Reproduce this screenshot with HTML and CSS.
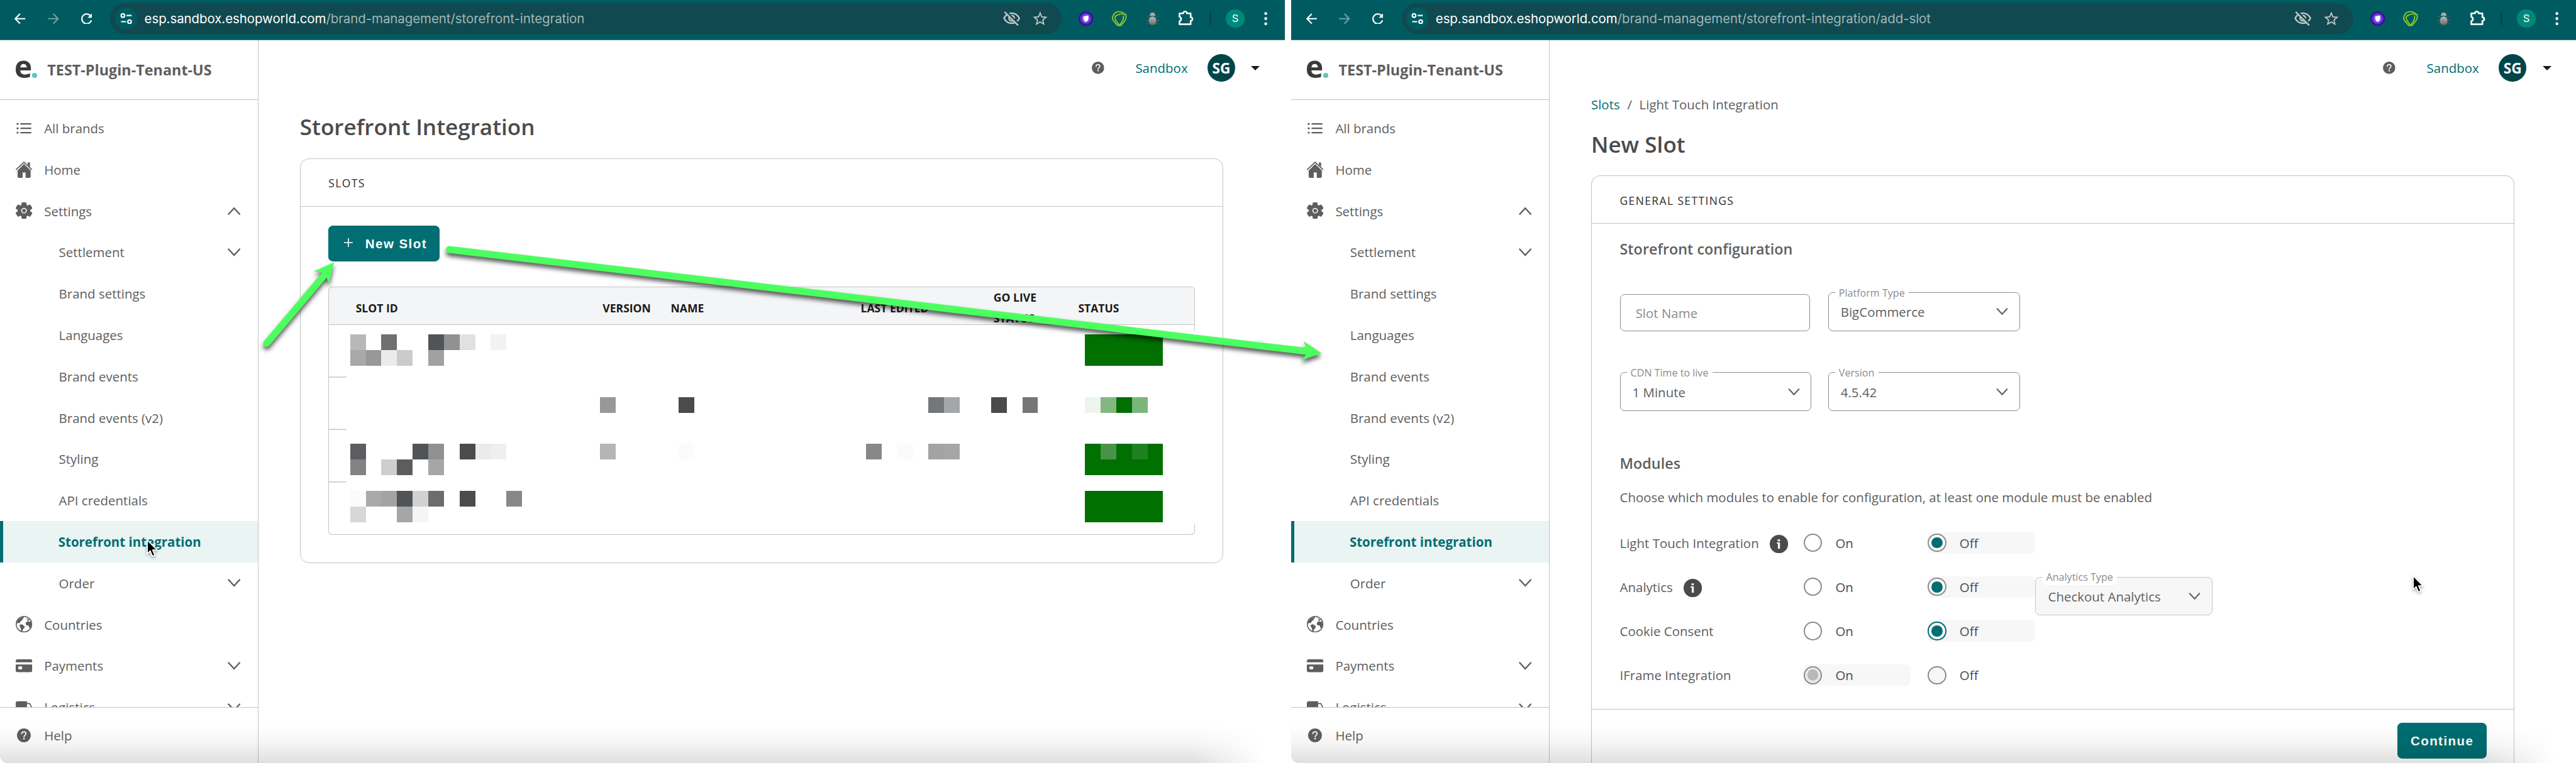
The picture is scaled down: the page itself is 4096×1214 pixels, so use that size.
FILE: index.html
```
<!DOCTYPE html>
<html lang="en">
<head>
<meta charset="utf-8">
<title>Storefront Integration</title>
<link rel="stylesheet" href="styles.css">
</head>
<body>
<svg class="defs" width="0" height="0" aria-hidden="true">
  <defs>
    <linearGradient id="bug-fill" x1="0" y1="0" x2="0" y2="1"><stop offset="0" stop-color="#b9b9b9"/><stop offset="1" stop-color="#6a6a6a"/></linearGradient>
    <symbol id="i-back" viewBox="0 0 24 24"><path d="M23.500 12H2M12 1.500L1.700 12 12 22.500" fill="none" stroke="currentColor" stroke-width="3"/></symbol>
    <symbol id="i-forward" viewBox="0 0 24 24"><path d="M.5 12H22M12 1.500L22.300 12 12 22.500" fill="none" stroke="currentColor" stroke-width="3"/></symbol>
    <symbol id="i-reload" viewBox="0 0 24 24"><path d="M22.300 15.500A10.600 10.600 0 1 1 20.600 5.800" fill="none" stroke="currentColor" stroke-width="3"/><path d="M24 0v10H14z" fill="currentColor"/></symbol>
    <symbol id="i-site" viewBox="0 0 26 24"><g fill="none" stroke="currentColor" stroke-width="3"><circle cx="6" cy="5" r="3.800"/><path d="M14 5h11M2 18.500h11"/><circle cx="20.500" cy="18.500" r="3.800"/></g></symbol>
    <symbol id="i-eye-off" viewBox="0 0 24 24"><path fill="currentColor" d="M12 6c3.790 0 7.170 2.130 8.820 5.500-.59 1.220-1.420 2.270-2.410 3.120l1.410 1.410c1.390-1.230 2.490-2.770 3.180-4.530C21.270 7.110 17 4 12 4c-1.270 0-2.490.2-3.640.57l1.650 1.650C10.660 6.090 11.320 6 12 6zm-1.070 1.140L13 9.210c.57.25 1.030.71 1.280 1.280l2.070 2.070c.08-.34.14-.7.14-1.070C16.500 9.010 14.480 7 12 7c-.37 0-.72.05-1.070.14zM2.010 3.870l2.680 2.680C3.060 7.830 1.770 9.530 1 11.500 2.730 15.890 7 19 12 19c1.520 0 2.980-.29 4.320-.82l3.420 3.420 1.410-1.410L3.420 2.450 2.010 3.870zm7.500 7.500l2.610 2.610c-.04.01-.08.02-.12.02-1.380 0-2.500-1.120-2.500-2.500 0-.05.01-.08.01-.13zm-3.400-3.400l1.750 1.750c-.23.55-.36 1.150-.36 1.780 0 2.480 2.020 4.500 4.500 4.500.63 0 1.230-.13 1.770-.36l.98.98c-.88.24-1.800.38-2.750.38-3.790 0-7.170-2.130-8.820-5.500.7-1.430 1.720-2.610 2.930-3.530z"/></symbol>
    <symbol id="i-star" viewBox="0 0 24 24"><path fill="currentColor" d="M22 9.240l-7.190-.62L12 2 9.190 8.630 2 9.240l5.460 4.730L5.820 21 12 17.270 18.180 21l-1.630-7.030L22 9.240zM12 15.400l-3.760 2.270 1-4.280-3.320-2.880 4.380-.38L12 6.100l1.710 4.040 4.380.38-3.320 2.880 1 4.280L12 15.400z"/></symbol>
    <symbol id="i-purple" viewBox="0 0 40 40"><circle cx="20" cy="20" r="16" fill="#38128f"/><circle cx="20" cy="20" r="12.500" fill="#5a2fcb"/><circle cx="20" cy="20" r="9" fill="#7d53ec"/><path d="M14.500 15.500L25.500 13v7c0 3-2 5.500-5 7.500-3-1.500-5-3.500-5.500-6z" fill="#fff"/></symbol>
    <symbol id="i-green" viewBox="0 0 40 40"><g fill="none" stroke="#8ac926" stroke-width="2.600" stroke-linecap="round" stroke-linejoin="round"><path d="M8.500 10.500Q11.500 5 20 5t11.500 5.500"/><path d="M8.500 10.500Q2.500 19 8 25l8.500 10h7L32 25q5-8 2-14.500Q22 8 12 14.500"/><path d="M12 14.500q-3 6 2 11.500l5 7M29.500 14q0 8-3.500 13l-4.500 6"/></g></symbol>
    <symbol id="i-bug" viewBox="0 0 40 40"><path d="M7 14l7 4M33 14l-7 4M5 24h8M35 24h-8M7 32l7-4M33 32l-7-4" stroke="#4a5a5c" stroke-width="2"/><path d="M14 14q0-7 6-7t6 7z" fill="#ababab"/><rect x="12" y="15.500" width="16" height="18.500" rx="8" fill="url(#bug-fill)"/></symbol>
    <symbol id="i-puzzle" viewBox="0 0 40 40"><path d="M7.500 8.500h8a4 4 0 0 1 8 0h8.200V17a4 4 0 0 1 0 8v7.300H7.500v-6.800a5 5 0 0 0 0-9.500z" fill="none" stroke="currentColor" stroke-width="3.600" stroke-linejoin="round"/></symbol>
    <symbol id="i-dots" viewBox="0 0 40 40"><g fill="currentColor"><circle cx="20" cy="9" r="3.100"/><circle cx="20" cy="20" r="3.100"/><circle cx="20" cy="31" r="3.100"/></g></symbol>
    <symbol id="i-help" viewBox="0 0 30 30"><circle cx="15" cy="15" r="15" fill="currentColor"/><path d="M10.200 11.600c.2-2.900 2.200-4.300 4.800-4.300 2.700 0 4.700 1.500 4.700 3.900 0 3.300-4.500 3.500-4.500 7.300" fill="none" stroke="#fff" stroke-width="2.400" stroke-linecap="round"/><circle cx="15.200" cy="22.300" r="1.700" fill="#fff"/></symbol>
    <symbol id="i-info" viewBox="0 0 40 40"><circle cx="20" cy="20" r="20" fill="#4b4b4d"/><path d="M17.200 10h5v4h-5zM15.500 16.500h6.700v13.500h-4.400V19h-2.300z" fill="#fff"/></symbol>
    <symbol id="i-list" viewBox="0 0 36 36"><g fill="currentColor"><circle cx="4" cy="8.500" r="2.200"/><circle cx="4" cy="18" r="2.200"/><circle cx="4" cy="27.500" r="2.200"/><rect x="10" y="7" width="24" height="3" rx="1"/><rect x="10" y="16.500" width="24" height="3" rx="1"/><rect x="10" y="26" width="24" height="3" rx="1"/></g></symbol>
    <symbol id="i-home" viewBox="0 0 36 36"><g fill="currentColor"><path d="M26 2h5v10l-5-5zM18 5.500L4 19.500V33a2.500 2.500 0 0 0 2.500 2.500H15V24h6.500v11.500H30a2.500 2.500 0 0 0 2.500-2.500V19.500z"/></g><path d="M0.500 18L18 1.500 35.500 18" fill="none" stroke="currentColor" stroke-width="2.400"/></symbol>
    <symbol id="i-gear" viewBox="0 0 36 36"><g fill="currentColor"><circle cx="18" cy="18" r="13.800"/><rect x="12.500" y="0" width="11" height="36" rx="2.500"/><rect x="12.500" y="-.5" width="11" height="37" rx="2.500" transform="rotate(60 18 18)"/><rect x="12.500" y="-.5" width="11" height="37" rx="2.500" transform="rotate(120 18 18)"/></g><circle cx="18" cy="18" r="5" fill="none" stroke="#fff" stroke-width="2.200"/></symbol>
    <symbol id="i-globe" viewBox="0 0 36 36"><circle cx="18" cy="18" r="16.900" fill="none" stroke="currentColor" stroke-width="2.200"/><path fill="currentColor" d="M7 6.500L14 2.500l4-.5-1 3-3 1.500 1.500 2-4.500 2.500-2 4-2.500 1L4 14.500 3 18 1.500 16Q2.500 10.500 7 6.500zM8.500 19l5-1 6 4.500-1 4-3 3-1.500 5.500-2-.5-1-7.500-2.500-4zM20 3l3 1-.5 2 2.500-.5L30.500 9l-4 1.500 2 2 4-.5 2 6-2 7.500-3 1-1.500-5.500-4.500-.5-2-3.500 1.500-4 4-1.500-2-2 .5-3-3-1.500z"/></symbol>
    <symbol id="i-card" viewBox="0 0 36 36"><path fill="currentColor" d="M0 10.500V8a4 4 0 0 1 4-4h28a4 4 0 0 1 4 4v2.500zM0 15.500h36V28a4 4 0 0 1-4 4H4a4 4 0 0 1-4-4z"/><rect x="5.500" y="19.500" width="8.500" height="6.500" rx="2" fill="#fff"/></symbol>
    <symbol id="i-truck" viewBox="0 0 36 36"><path fill="currentColor" d="M0 9a4 4 0 0 1 4-4h20.500v23H0z"/><path d="M24.500 10h4.500q1.500 0 2.200 1.400L35 19v9H24.500" fill="none" stroke="currentColor" stroke-width="2.300"/><g fill="currentColor"><circle cx="9" cy="29" r="4"/><circle cx="28" cy="29" r="4"/></g></symbol>
    <symbol id="i-chevron" viewBox="0 0 28 18"><path d="M2 2l12 13L26 2" fill="none" stroke="currentColor" stroke-width="3.200" stroke-linecap="round"/></symbol>
    <symbol id="i-plus" viewBox="0 0 20 20"><path d="M10 0v20M0 10h20" stroke="currentColor" stroke-width="2.300"/></symbol>
    <symbol id="i-cursor" viewBox="0 0 26 40"><path d="M1.500 1.500v30l6.500-6 4.800 11.500 5.400-2.300L13.500 23.500H23z" fill="#000" stroke="#fff" stroke-width="2.400" stroke-linejoin="round"/></symbol>
  </defs>
</svg>

<div class="desktop">
  <section class="window">
    <header class="toolbar">
      <nav class="history">
        <span class="tool"><svg class="ico24"><use href="#i-back"/></svg></span>
        <span class="tool is-dim"><svg class="ico24"><use href="#i-forward"/></svg></span>
        <span class="tool"><svg class="ico24"><use href="#i-reload"/></svg></span>
      </nav>
      <div class="address">
        <span class="site"><svg class="ico-site"><use href="#i-site"/></svg></span>
        <span class="url">esp.sandbox.eshopworld.com<span class="path">/brand-management/storefront-integration</span></span>
        <svg class="ico-eye"><use href="#i-eye-off"/></svg>
        <svg class="ico-star"><use href="#i-star"/></svg>
      </div>
      <div class="extensions">
        <svg class="ico40"><use href="#i-purple"/></svg>
        <svg class="ico40"><use href="#i-green"/></svg>
        <svg class="ico40"><use href="#i-bug"/></svg>
        <svg class="ico40"><use href="#i-puzzle"/></svg>
        <span class="divider"></span>
        <span class="profile">S</span>
        <svg class="ico40 ico-menu"><use href="#i-dots"/></svg>
      </div>
    </header>
    <div class="app">
      <aside class="sidebar">
        <div class="brand"><span class="logo">e<i></i></span><span class="tenant">TEST-Plugin-Tenant-US</span></div>
        <nav class="menu">
          <a class="item"><svg class="ico36"><use href="#i-list"/></svg><span>All brands</span></a>
          <a class="item"><svg class="ico36"><use href="#i-home"/></svg><span>Home</span></a>
          <a class="item"><svg class="ico36"><use href="#i-gear"/></svg><span>Settings</span><svg class="chev up"><use href="#i-chevron"/></svg></a>
          <a class="item sub"><span>Settlement</span><svg class="chev"><use href="#i-chevron"/></svg></a>
          <a class="item sub"><span>Brand settings</span></a>
          <a class="item sub"><span>Languages</span></a>
          <a class="item sub"><span>Brand events</span></a>
          <a class="item sub"><span>Brand events (v2)</span></a>
          <a class="item sub"><span>Styling</span></a>
          <a class="item sub"><span>API credentials</span></a>
          <a class="item sub active"><span>Storefront integration</span></a>
          <a class="item sub"><span>Order</span><svg class="chev"><use href="#i-chevron"/></svg></a>
          <a class="item"><svg class="ico36"><use href="#i-globe"/></svg><span>Countries</span></a>
          <a class="item"><svg class="ico36"><use href="#i-card"/></svg><span>Payments</span><svg class="chev"><use href="#i-chevron"/></svg></a>
          <a class="item"><svg class="ico36"><use href="#i-truck"/></svg><span>Logistics</span><svg class="chev"><use href="#i-chevron"/></svg></a>
        </nav>
        <a class="item help"><svg class="ico-help"><use href="#i-help"/></svg><span>Help</span></a>
      </aside>
      <main class="main">
        <div class="userbar">
          <svg class="ico-about"><use href="#i-help"/></svg>
          <span class="env">Sandbox</span>
          <span class="avatar">SG</span>
          <span class="caret"></span>
        </div>
        <div class="content">
          <h1 class="title">Storefront Integration</h1>
          <section class="card">
            <header class="card-head">SLOTS</header>
            <div class="slots">
              <button class="btn btn-new"><svg class="ico-plus"><use href="#i-plus"/></svg>New Slot</button>
              <div class="table">
                <div class="thead">
                  <span>SLOT ID</span><span>VERSION</span><span>NAME</span><span>LAST EDITED</span><span class="two-line">GO LIVE STATUS</span><span>STATUS</span>
                </div>
                <div class="tbody">
                  <!-- Row separators and redacted cells, on a 34px grid -->
                  <svg class="redacted" viewBox="716 707 1880 455">
                    <path d="M716 819.500h38v2h-38zM716 933.500h38v2h-38zM716 1047.500h38v2h-38z" fill="#c4c4c4"/>
                    <rect x="2594" y="720" width="8" height="420" fill="#fff"/>
                    <g transform="translate(762 728) scale(34)" shape-rendering="crispEdges">
                      <path fill="#b8b8b8" d="M0 0h1v1H0z"/><path fill="#6e6f70" d="M2 0h1v1H2z"/><path fill="#525355" d="M5 0h1v1H5zM4 7h1v1H4zM3 10h1v1H3z"/><path fill="#909192" d="M6 0h1v1H6zM5 7h1v1H5z"/><path fill="#e1e1e1" d="M7 0h1v1H7z"/><path fill="#f2f2f2" d="M9 0h1v1H9z"/>
                      <path fill="#a8a8a8" d="M0 1h1v1H0z"/><path fill="#97989a" d="M1 1h1v1H1zM16 4h1v1h-1z"/><path fill="#ebebeb" d="M2 1h1v1H2zM8 7h1v1H8z"/><path fill="#cbcbcb" d="M3 1h1v1H3z"/><path fill="#a1a1a1" d="M5 1h1v1H5z"/>
                      <path fill="#4b4b4d" d="M21 4h1v1h-1zM41 4h1v1h-1zM7 7h1v1H7zM7 10h1v1H7z"/><path fill="#757678" d="M37 4h1v1h-1zM43 4h1v1h-1z"/><path fill="#a5a6a8" d="M38 4h1v1h-1zM38 7h1v1h-1zM5 8h1v1H5zM3 11h1v1H3z"/>
                      <path fill="#5c5d5f" d="M0 7h1v1H0zM3 8h1v1H3z"/><path fill="#efefef" d="M9 7h1v1H9z"/><path fill="#b4b5b4" d="M16 7h1v1h-1z"/><path fill="#fbfbfb" d="M21 7h1v1h-1zM35 7h1v1h-1zM0 10h1v1H0z"/><path fill="#87888a" d="M33 7h1v1h-1zM10 10h1v1h-1z"/><path fill="#a3a3a3" d="M37 7h1v1h-1zM2 10h1v1H2z"/>
                      <path fill="#838385" d="M0 8h1v1H0z"/><path fill="#cdcfce" d="M2 8h1v1H2z"/><path fill="#a8aaa9" d="M1 10h1v1H1z"/><path fill="#d1d1d1" d="M4 10h1v1H4z"/><path fill="#6b6c6e" d="M5 10h1v1H5z"/><path fill="#d7d7d7" d="M0 11h1v1H0z"/><path fill="#f5f5f5" d="M4 11h1v1H4z"/>
                      <path fill="#007000" d="M47 0h5v2h-5zM49 4h1v1h-1zM47 7h5v2h-5zM47 10h5v2h-5z"/><path fill="#eef4ee" d="M47 4h1v1h-1z"/><path fill="#83b782" d="M48 4h1v1h-1z"/><path fill="#7bb57b" d="M50 4h1v1h-1z"/><path fill="#479347" d="M48 7h1v1h-1z"/><path fill="#1e801e" d="M50 7h1v1h-1z"/>
                    </g>
                  </svg>
                </div>
              </div>
            </div>
          </section>
        </div>
      </main>
    </div>
  </section>

  <section class="window">
    <header class="toolbar">
      <nav class="history">
        <span class="tool"><svg class="ico24"><use href="#i-back"/></svg></span>
        <span class="tool is-dim"><svg class="ico24"><use href="#i-forward"/></svg></span>
        <span class="tool"><svg class="ico24"><use href="#i-reload"/></svg></span>
      </nav>
      <div class="address">
        <span class="site"><svg class="ico-site"><use href="#i-site"/></svg></span>
        <span class="url">esp.sandbox.eshopworld.com<span class="path">/brand-management/storefront-integration/add-slot</span></span>
        <svg class="ico-eye"><use href="#i-eye-off"/></svg>
        <svg class="ico-star"><use href="#i-star"/></svg>
      </div>
      <div class="extensions">
        <svg class="ico40"><use href="#i-purple"/></svg>
        <svg class="ico40"><use href="#i-green"/></svg>
        <svg class="ico40"><use href="#i-bug"/></svg>
        <svg class="ico40"><use href="#i-puzzle"/></svg>
        <span class="divider"></span>
        <span class="profile">S</span>
        <svg class="ico40 ico-menu"><use href="#i-dots"/></svg>
      </div>
    </header>
    <div class="app">
      <aside class="sidebar">
        <div class="brand"><span class="logo">e<i></i></span><span class="tenant">TEST-Plugin-Tenant-US</span></div>
        <nav class="menu">
          <a class="item"><svg class="ico36"><use href="#i-list"/></svg><span>All brands</span></a>
          <a class="item"><svg class="ico36"><use href="#i-home"/></svg><span>Home</span></a>
          <a class="item"><svg class="ico36"><use href="#i-gear"/></svg><span>Settings</span><svg class="chev up"><use href="#i-chevron"/></svg></a>
          <a class="item sub"><span>Settlement</span><svg class="chev"><use href="#i-chevron"/></svg></a>
          <a class="item sub"><span>Brand settings</span></a>
          <a class="item sub"><span>Languages</span></a>
          <a class="item sub"><span>Brand events</span></a>
          <a class="item sub"><span>Brand events (v2)</span></a>
          <a class="item sub"><span>Styling</span></a>
          <a class="item sub"><span>API credentials</span></a>
          <a class="item sub active"><span>Storefront integration</span></a>
          <a class="item sub"><span>Order</span><svg class="chev"><use href="#i-chevron"/></svg></a>
          <a class="item"><svg class="ico36"><use href="#i-globe"/></svg><span>Countries</span></a>
          <a class="item"><svg class="ico36"><use href="#i-card"/></svg><span>Payments</span><svg class="chev"><use href="#i-chevron"/></svg></a>
          <a class="item"><svg class="ico36"><use href="#i-truck"/></svg><span>Logistics</span><svg class="chev"><use href="#i-chevron"/></svg></a>
        </nav>
        <a class="item help"><svg class="ico-help"><use href="#i-help"/></svg><span>Help</span></a>
      </aside>
      <main class="main">
        <div class="userbar">
          <svg class="ico-about"><use href="#i-help"/></svg>
          <span class="env">Sandbox</span>
          <span class="avatar">SG</span>
          <span class="caret"></span>
        </div>
        <div class="content content-form">
          <nav class="crumbs"><a>Slots</a><span>/</span><span>Light Touch Integration</span></nav>
          <h1 class="title">New Slot</h1>
          <section class="card card-open">
            <header class="card-head">GENERAL SETTINGS</header>
            <div class="form">
              <h2 class="heading">Storefront configuration</h2>
              <div class="fields">
                <div class="field field-plain"><span>Slot Name</span></div>
                <div class="field"><label>Platform Type</label><span>BigCommerce</span><svg class="arrow"><use href="#i-chevron"/></svg></div>
                <div class="field"><label>CDN Time to live</label><span>1 Minute</span><svg class="arrow"><use href="#i-chevron"/></svg></div>
                <div class="field"><label>Version</label><span>4.5.42</span><svg class="arrow"><use href="#i-chevron"/></svg></div>
              </div>
              <h2 class="heading">Modules</h2>
              <p class="hint">Choose which modules to enable for configuration, at least one module must be enabled</p>
              <div class="modules">
                <div class="module">
                  <span class="name">Light Touch Integration<svg class="ico40"><use href="#i-info"/></svg></span>
                  <span class="option"><i class="radio"></i>On</span>
                  <span class="option selected"><i class="radio checked"></i>Off</span>
                </div>
                <div class="module">
                  <span class="name">Analytics<svg class="ico40"><use href="#i-info"/></svg></span>
                  <span class="option"><i class="radio"></i>On</span>
                  <span class="option selected"><i class="radio checked"></i>Off</span>
                  <div class="field field-disabled"><label>Analytics Type</label><span>Checkout Analytics</span><svg class="arrow"><use href="#i-chevron"/></svg></div>
                </div>
                <div class="module">
                  <span class="name">Cookie Consent</span>
                  <span class="option"><i class="radio"></i>On</span>
                  <span class="option selected"><i class="radio checked focus"></i>Off</span>
                </div>
                <div class="module">
                  <span class="name">IFrame Integration</span>
                  <span class="option selected"><i class="radio checked disabled"></i>On</span>
                  <span class="option"><i class="radio disabled"></i>Off</span>
                </div>
              </div>
            </div>
            <footer class="card-foot"><button class="btn btn-continue">Continue</button></footer>
          </section>
        </div>
      </main>
    </div>
  </section>

  <svg class="cursor cursor-left"><use href="#i-cursor"/></svg>
  <svg class="cursor cursor-right"><use href="#i-cursor"/></svg>

  <svg class="annotations" viewBox="0 0 5602 1660">
    <g class="arrow-mark">
      <path d="M580 747L705 599" stroke="#4bff5f" stroke-width="15" stroke-linecap="round"/>
      <path d="M726 571L682.500 590.500 699 593 710 602 715 619z" fill="#4bff5f"/>
    </g>
    <g class="arrow-mark">
      <path d="M977 543L2842 764.500" stroke="#4bff5f" stroke-width="15" stroke-linecap="round"/>
      <path d="M2874 768.500L2834 742 2841 757 2839.500 772 2829.500 784.500z" fill="#4bff5f"/>
    </g>
  </svg>
</div>
</body>
</html>
```
FILE: styles.css
```
* { box-sizing: border-box; }

html { overflow: hidden; background: #fff; }

body {
  margin: 0;
  overflow: hidden;
  font-family: "Open Sans", "Noto Sans", sans-serif;
  font-size: 28px;
  color: #5e5e5e;
}

h1, h2, p { margin: 0; }
svg { display: block; flex: none; }
.defs { position: absolute; }

.desktop {
  position: relative;
  display: flex;
  gap: 14px;
  width: 5602px;
  height: 1660px;
  overflow: hidden;
  zoom: 0.7312;
}

.window {
  position: relative;
  display: flex;
  flex-direction: column;
  width: 2794px;
  height: 1660px;
  overflow: hidden;
  background: #fff;
  border-radius: 0 0 16px 16px;
}

/* Shade along the lower edge of each window */
.window::after {
  content: "";
  position: absolute;
  inset: auto 0 0 0;
  height: 82px;
  background: linear-gradient(rgba(0,0,0,0), rgba(0,0,0,.045) 50%, rgba(0,0,0,.125));
  -webkit-mask-image: linear-gradient(to right, #000 calc(100% - 200px), transparent calc(100% - 45px));
  mask-image: linear-gradient(to right, #000 calc(100% - 200px), transparent calc(100% - 45px));
}

/* Browser toolbar */
.toolbar {
  display: flex;
  align-items: center;
  flex: none;
  height: 88px;
  padding: 0 22px 6px 24px;
  background: #005b61;
  border-bottom: 2px solid #3d7f86;
  color: #fff;
}
.history { display: flex; gap: 32px; width: 216px; }
.tool { display: flex; justify-content: center; width: 40px; }
.is-dim { color: #6f9fa2; }
.address {
  display: flex;
  align-items: center;
  width: 2069px;
  height: 68px;
  padding: 0 28px 0 10px;
  border-radius: 34px;
  background: #10494f;
}
.site {
  display: flex;
  align-items: center;
  justify-content: center;
  width: 48px;
  height: 48px;
  margin-right: 16px;
  border-radius: 50%;
  background: #005b61;
}
.url {
  flex: 1;
  font-family: Inter, Roboto, sans-serif;
  letter-spacing: -.1px;
  white-space: nowrap;
}
.path { color: #a0b6b8; }
.ico24 { width: 24px; height: 24px; }
.ico36 { width: 36px; height: 36px; overflow: visible; }
.ico40 { width: 40px; height: 40px; }
.ico-site { width: 26px; height: 24px; }
.ico-eye { width: 40px; height: 40px; margin-right: 23px; color: #bdc6c7; }
.ico-star { width: 38px; height: 38px; color: #bdc6c7; }
.extensions { display: flex; align-items: center; gap: 32px; margin-left: 33px; }
.divider { width: 4px; height: 32px; border-radius: 2px; background: #0b4348; }
.profile {
  display: flex;
  align-items: center;
  justify-content: center;
  width: 40px;
  height: 40px;
  border-radius: 50%;
  background: #00897b;
  font-family: Roboto, sans-serif;
  font-size: 23px;
}
.ico-menu { margin-left: -6px; }

/* Sidebar */
.app { display: flex; flex: 1; min-height: 0; }
.sidebar {
  display: flex;
  flex-direction: column;
  flex: none;
  width: 562px;
  border-right: 2px solid #c4c4c4;
}
.brand {
  display: flex;
  align-items: center;
  flex: none;
  height: 130px;
  padding-left: 31px;
  border-bottom: 2px solid #c4c4c4;
}
.logo {
  width: 72px;
  margin-top: -15px;
  font-size: 66px;
  font-weight: 700;
  line-height: 84px;
  color: #3a3a3a;
}
.logo i { display: inline-block; width: 11px; height: 11px; border-radius: 50%; background: #5fc3b8; }
.tenant { font-size: 32px; font-weight: 700; }
.menu { flex: 1; min-height: 0; padding-top: 16px; overflow: hidden; }
.item {
  display: flex;
  align-items: center;
  gap: 26px;
  height: 90px;
  padding: 0 38px 0 34px;
}
.sub { padding-left: 128px; }
.active {
  padding-left: 120px;
  border-left: 8px solid #006e72;
  background: #eaf4f3;
  font-weight: 700;
  color: #006e72;
}
.chev { width: 28px; height: 18px; margin-left: auto; overflow: visible; }
.up { transform: rotate(180deg); }
.help { flex: none; height: 122px; gap: 29px; padding-left: 37px; border-top: 2px solid #c4c4c4; }
.ico-help { width: 30px; height: 30px; }

/* Page header */
.main { flex: 1; display: flex; flex-direction: column; min-width: 0; }
.userbar {
  display: flex;
  align-items: center;
  justify-content: flex-end;
  flex: none;
  height: 120px;
  padding-right: 54px;
}
.ico-about { width: 27px; height: 27px; margin-right: 68px; }
.env { margin-right: 43px; color: #006e72; }
.avatar {
  display: flex;
  align-items: center;
  justify-content: center;
  width: 60px;
  height: 60px;
  margin-right: 35px;
  border-radius: 50%;
  background: #00454a;
  font-size: 31px;
  font-weight: 700;
  color: #fff;
}
.caret { border: 10px solid transparent; border-top-color: #1a1a1a; border-bottom: 0; }

.content { display: flex; flex-direction: column; flex: 1; min-height: 0; padding: 38px 134px 0 90px; }
.title { flex: none; margin-bottom: 38px; font-size: 48px; font-weight: 600; line-height: 60px; color: #4b4b4d; }

/* Cards */
.card { border: 2px solid #c4c4c4; border-radius: 20px; }
.card-head {
  display: flex;
  align-items: center;
  flex: none;
  height: 104px;
  padding: 4px 60px 0 61px;
  border-bottom: 2px solid #c4c4c4;
  font-size: 24px;
  letter-spacing: 1.85px;
  color: #2e2e2e;
}
.btn {
  display: flex;
  align-items: center;
  height: 78px;
  border: 0;
  border-radius: 10px;
  background: #006e72;
  font: 700 28px "Liberation Sans", Arial, sans-serif;
  letter-spacing: 2px;
  color: #fff;
}
.btn-new { width: 242px; padding: 2px 0 0 34px; }
.ico-plus { width: 19px; height: 19px; margin: -6px 27px 0 0; }

/* Slots table */
.slots { padding: 41px 60px 60px 61px; }
.table { margin-top: 56px; }
.thead {
  display: grid;
  grid-template-columns: 537px 148px 413px 289px 184px 1fr;
  align-items: center;
  height: 83px;
  padding: 0 0 0 58px;
  border: 2px solid #c4c4c4;
  border-radius: 8px 8px 0 0;
  background: #f4f5f7;
  font-size: 24px;
  font-weight: 700;
  line-height: 44px;
  color: #1a1a1a;
}
.two-line { width: 110px; }
.tbody { height: 457px; border: 2px solid #c4c4c4; border-top: 0; border-radius: 0 0 8px 8px; }
.redacted { width: 1880px; height: 455px; overflow: visible; }

/* New slot form */
.content-form { padding-top: 0; }
.crumbs { display: flex; flex: none; gap: 16px; height: 38px; line-height: 38px; }
.crumbs a { color: #006e72; }
.content-form .crumbs { margin: 1px 0 37px; }
.content-form .title { margin: 0 0 38px; }
.card-open { display: flex; flex-direction: column; flex: 1; min-height: 0; overflow: hidden; border-bottom: 0; border-radius: 20px 20px 0 0; }
.form { flex: none; padding: 33px 60px 26px 61px; }
.heading { font-size: 32px; font-weight: 600; line-height: 44px; }
.fields {
  display: grid;
  grid-template-columns: 417px 417px;
  gap: 90px 36px;
  align-items: end;
  margin: 72px 0 92px;
}
.field {
  position: relative;
  display: flex;
  align-items: center;
  justify-content: space-between;
  height: 84px;
  padding: 1px 24px 0 26px;
  border: 2px solid #8c8c8c;
  border-radius: 10px;
}
.field label {
  position: absolute;
  left: 14px;
  top: -16px;
  padding: 0 9px 0 8px;
  background: #fff;
  border-radius: 8px;
  font-size: 22px;
  line-height: 32px;
  color: #8c8c8c;
}
.field-plain { width: 413px; height: 80px; padding-left: 33px; color: #8c8c8c; }
.field-disabled { width: 385px; margin-top: 40px; border-color: #c4c4c4; background: #f7f7f7; }
.arrow { width: 26px; height: 16px; overflow: visible; }

.hint { margin-top: 32px; line-height: 40px; }
.modules { margin-top: 31px; }
.module { display: flex; align-items: center; height: 96px; }
.name { display: flex; align-items: center; gap: 24px; width: 400px; height: 40px; }
.name svg { margin-top: 5px; }
.option {
  display: flex;
  align-items: center;
  gap: 29px;
  width: 233px;
  height: 46px;
  margin-right: 37px;
  border-radius: 10px;
  color: #4b4b4d;
}
.option + .option { width: 234px; margin-right: 0; }
.selected { background: #f7f7f7; }
.radio {
  display: flex;
  align-items: center;
  justify-content: center;
  flex: none;
  width: 40px;
  height: 40px;
  border: 2.800px solid #8c8c8c;
  border-radius: 50%;
  background: #fff;
}
.checked::before { content: ""; width: 24px; height: 24px; border-radius: 50%; background: #006e72; }
.focus { border-color: #006e72; }
.disabled { background: #f7f7f7; }
.checked.disabled { background: #ebebeb; }
.checked.disabled::before { background: #b8b8b8; }

.card-foot {
  display: flex;
  justify-content: flex-end;
  flex: none;
  padding: 28px 59px 0;
  border-top: 2px solid #c4c4c4;
}
.btn-continue { justify-content: center; width: 194px; padding: 2px 0 0; }

/* Pointers and callout arrows over the windows */
.cursor { position: absolute; width: 26px; height: 40px; filter: drop-shadow(0 3px 3px rgba(0,0,0,.35)); overflow: visible; }
.cursor-left { left: 319px; top: 1174px; }
.cursor-right { left: 5246px; top: 1251px; }
.annotations { position: absolute; inset: 0; width: 5602px; height: 1660px; }
.arrow-mark { filter: drop-shadow(0 8px 5px rgba(0,0,0,.65)); }
```
